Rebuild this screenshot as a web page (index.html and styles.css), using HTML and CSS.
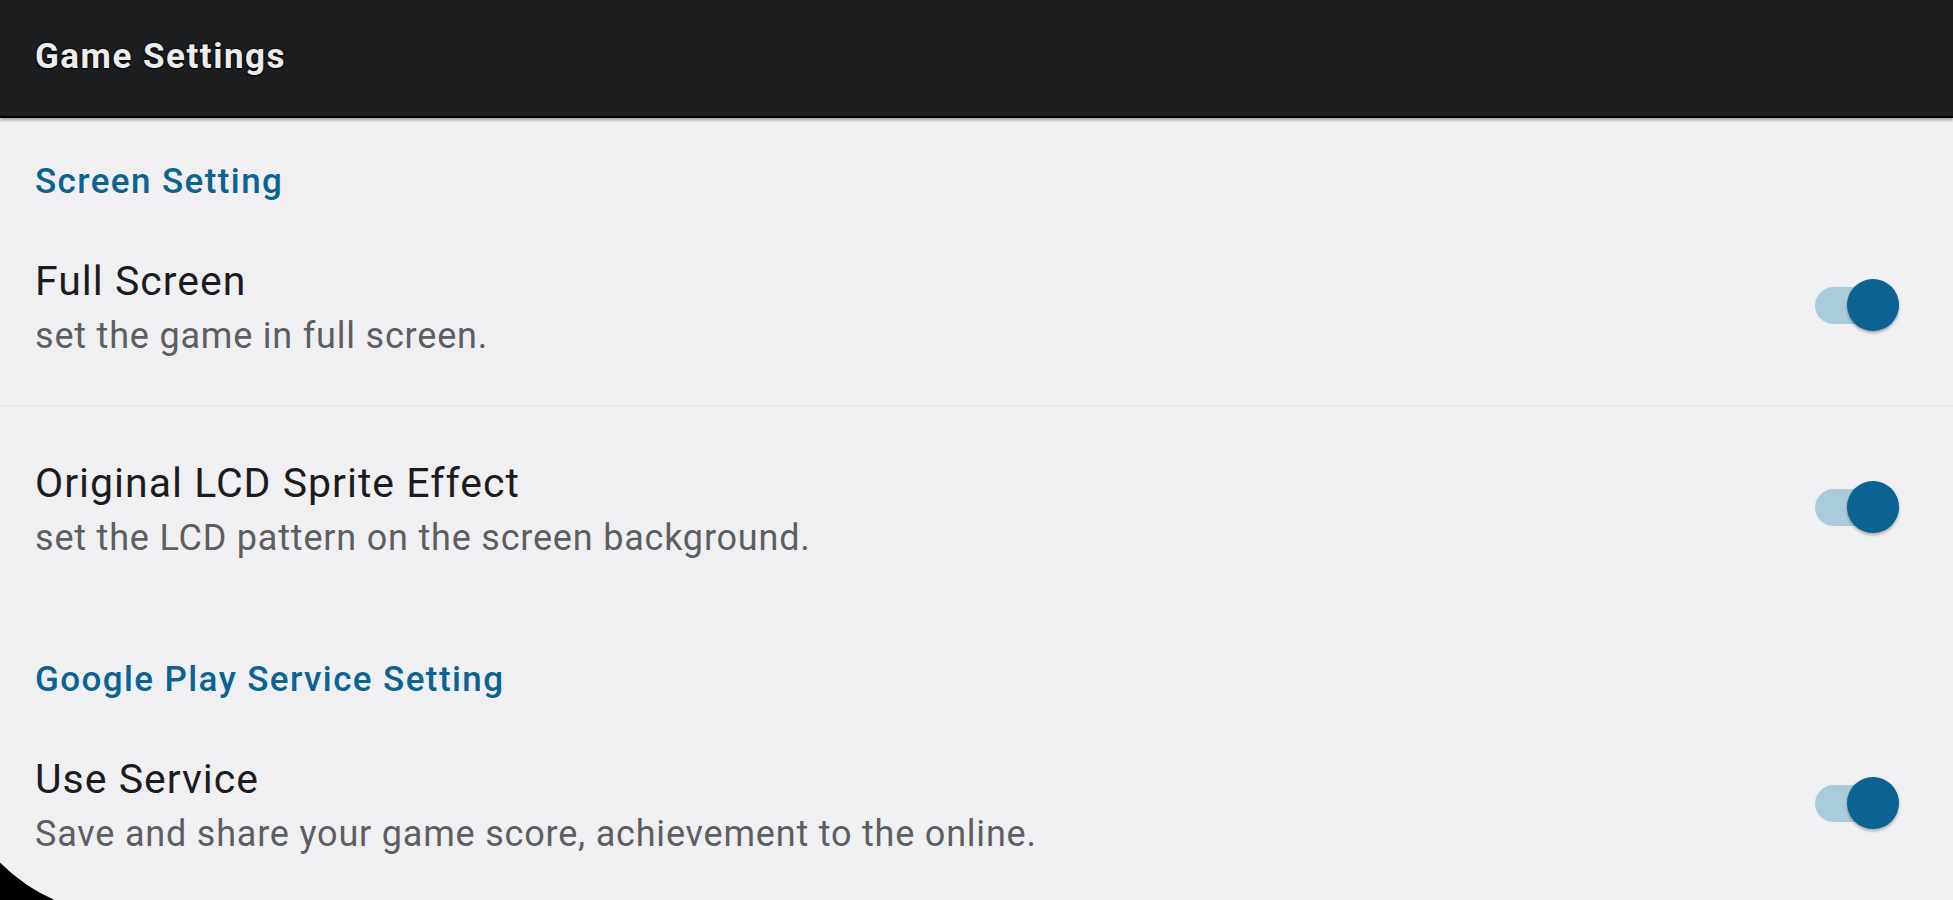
FILE: index.html
```html
<!DOCTYPE html>
<html lang="en">

<head>
    <meta charset="UTF-8">
    <meta name="viewport" content="width=device-width, initial-scale=1.0">
    <title>Game Settings</title>
    <link rel="stylesheet" href="styles.css">
</head>

<body>

    <header class="toolbar">
        <h1>Game Settings</h1>
    </header>

    <main class="screen">
        <h2 class="category first">Screen Setting</h2>

        <div class="pref divided">
            <div class="pref-text">
                <div class="pref-title">Full Screen</div>
                <div class="pref-summary">set the game in full screen.</div>
            </div>
            <span class="switch on"><span class="track"></span><span class="thumb"></span></span>
        </div>

        <div class="pref">
            <div class="pref-text">
                <div class="pref-title">Original LCD Sprite Effect</div>
                <div class="pref-summary">set the LCD pattern on the screen background.</div>
            </div>
            <span class="switch on"><span class="track"></span><span class="thumb"></span></span>
        </div>

        <h2 class="category">Google Play Service Setting</h2>

        <div class="pref">
            <div class="pref-text">
                <div class="pref-title">Use Service</div>
                <div class="pref-summary">Save and share your game score, achievement to the online.</div>
            </div>
            <span class="switch on"><span class="track"></span><span class="thumb"></span></span>
        </div>
    </main>

</body>

</html>
```

FILE: styles.css
```css
:root {
    --bar: #1d1e20;
    --surface: #f0f0f3;
    --accent: #0b6391;
    --accent-light: #a9cbda;
    --title: #1c1c1e;
    --summary: #5d5e61;
    --divider: #e2e2e5;
}

html,
body {
    margin: 0;
    padding: 0;
    height: 900px;
    overflow: hidden;
    background-color: #000;
    font-family: Roboto, "Noto Sans", sans-serif;
}

/* Barra superior */
.toolbar {
    position: relative;
    z-index: 2;
    height: 116px;
    display: flex;
    align-items: center;
    padding-left: 35px;
    background-color: var(--bar);
    border-bottom: 2px solid #000;
    box-shadow: 0 2px 3px rgba(0, 0, 0, 0.35);
}

.toolbar h1 {
    margin: 0 0 4px;
    font-size: 35px;
    font-weight: 700;
    letter-spacing: 1.5px;
    color: #ececec;
    text-shadow: 0 0 3px #000, 0 1px 2px #000;
}

/* Panel con la esquina redondeada de la pantalla */
.screen {
    margin-left: -52px;
    min-height: 797px;
    background-color: var(--surface);
    border-bottom-left-radius: 178px;
}

.category {
    margin: 0;
    padding: 51px 54px 0 87px;
    font-size: 35px;
    line-height: 44px;
    font-weight: 500;
    letter-spacing: 1.4px;
    color: var(--accent);
}

.category.first {
    padding-top: 42px;
}

.pref {
    display: flex;
    align-items: center;
    padding: 51px 54px 43px 87px;
}

.pref.divided {
    border-bottom: 1px solid var(--divider);
}

.pref-text {
    flex: 1;
}

.pref-title {
    font-size: 41px;
    line-height: 52px;
    letter-spacing: 1px;
    color: var(--title);
}

.pref-summary {
    margin-top: 3px;
    font-size: 36px;
    line-height: 52px;
    letter-spacing: 0.8px;
    color: var(--summary);
}

/* Interruptor */
.switch {
    position: relative;
    width: 84px;
    height: 52px;
    margin-bottom: 8px;
}

.switch .track {
    position: absolute;
    left: 0;
    right: 0;
    top: 8px;
    height: 37px;
    border-radius: 19px;
    background-color: var(--accent-light);
}

.switch .thumb {
    position: absolute;
    right: 0;
    top: 0;
    width: 52px;
    height: 52px;
    border-radius: 50%;
    background-color: var(--accent);
    box-shadow: 0 2px 3px rgba(0, 0, 0, 0.3);
}
```
